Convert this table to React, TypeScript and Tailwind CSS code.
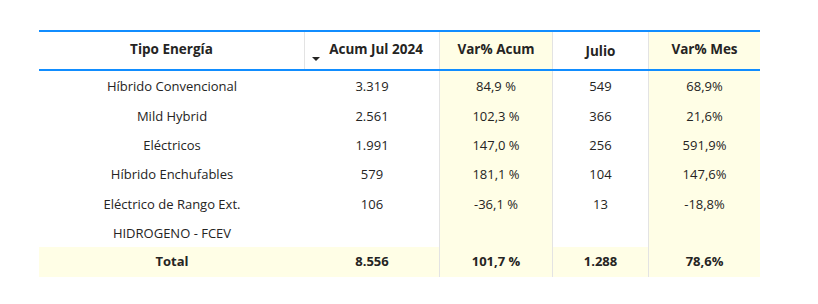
import React from "react";

const rows = [
  ["Híbrido Convencional", "3.319", "84,9 %", "549", "68,9%"],
  ["Mild Hybrid", "2.561", "102,3 %", "366", "21,6%"],
  ["Eléctricos", "1.991", "147,0 %", "256", "591,9%"],
  ["Híbrido Enchufables", "579", "181,1 %", "104", "147,6%"],
  ["Eléctrico de Rango Ext.", "106", "-36,1 %", "13", "-18,8%"],
  ["HIDROGENO - FCEV", "", "", "", ""],
];

const cols = "grid grid-cols-[266px_135px_113px_96px_111px]";

export default function App() {
  return (
    <div
      className="w-[818px] h-[304px] bg-white text-[#252423]"
      style={{ fontFamily: '"Open Sans", "Noto Sans", sans-serif' }}
    >
      <div className="pt-[30px] pl-[39px]">
        <div className="w-[721px]">
          {/* header */}
          <div className={`${cols} h-[41px] border-t-2 border-b-2 border-[#118dff] text-[13.5px] font-bold`}>
            <div className="flex items-center justify-center border-r border-[#e3e3e3] pb-[3px]">Tipo Energía</div>
            <div className="relative flex items-center justify-center border-r border-[#e3e3e3] pb-[3px] pl-[8px]">
              <span className="absolute left-[7px] top-[25px] w-0 h-0 border-l-[4.5px] border-r-[4.5px] border-t-[4px] border-l-transparent border-r-transparent border-t-[#252423]" />
              Acum Jul 2024
            </div>
            <div className="flex items-center justify-center bg-[#fffee6] border-r border-[#e3e3e3] pb-[3px]">Var% Acum</div>
            <div className="flex items-center justify-center border-r border-[#e3e3e3] pt-[1px]">Julio</div>
            <div className="flex items-center justify-center bg-[#fffee6] pb-[3px]">Var% Mes</div>
          </div>
          {/* body */}
          {rows.map((r, i) => (
            <div key={i} className={`${cols} h-[29.33px] text-[13px]`}>
              <div className="flex items-center justify-center pt-[3px]">{r[0]}</div>
              <div className="flex items-center justify-center border-r border-[#e3e3e3] pt-[3px]">{r[1]}</div>
              <div className="flex items-center justify-center bg-[#fffee6] border-r border-[#e3e3e3] pt-[3px]">{r[2]}</div>
              <div className="flex items-center justify-center border-r border-[#e3e3e3] pt-[3px]">{r[3]}</div>
              <div className="flex items-center justify-center bg-[#fffee6] pt-[3px]">{r[4]}</div>
            </div>
          ))}
          {/* total */}
          <div className={`${cols} h-[30px] text-[13px] font-bold bg-[#fffee6]`}>
            <div className="flex items-center justify-center">Total</div>
            <div className="flex items-center justify-center border-r border-[#e3e3e3]">8.556</div>
            <div className="flex items-center justify-center border-r border-[#e3e3e3]">101,7 %</div>
            <div className="flex items-center justify-center border-r border-[#e3e3e3]">1.288</div>
            <div className="flex items-center justify-center">78,6%</div>
          </div>
        </div>
      </div>
    </div>
  );
}
